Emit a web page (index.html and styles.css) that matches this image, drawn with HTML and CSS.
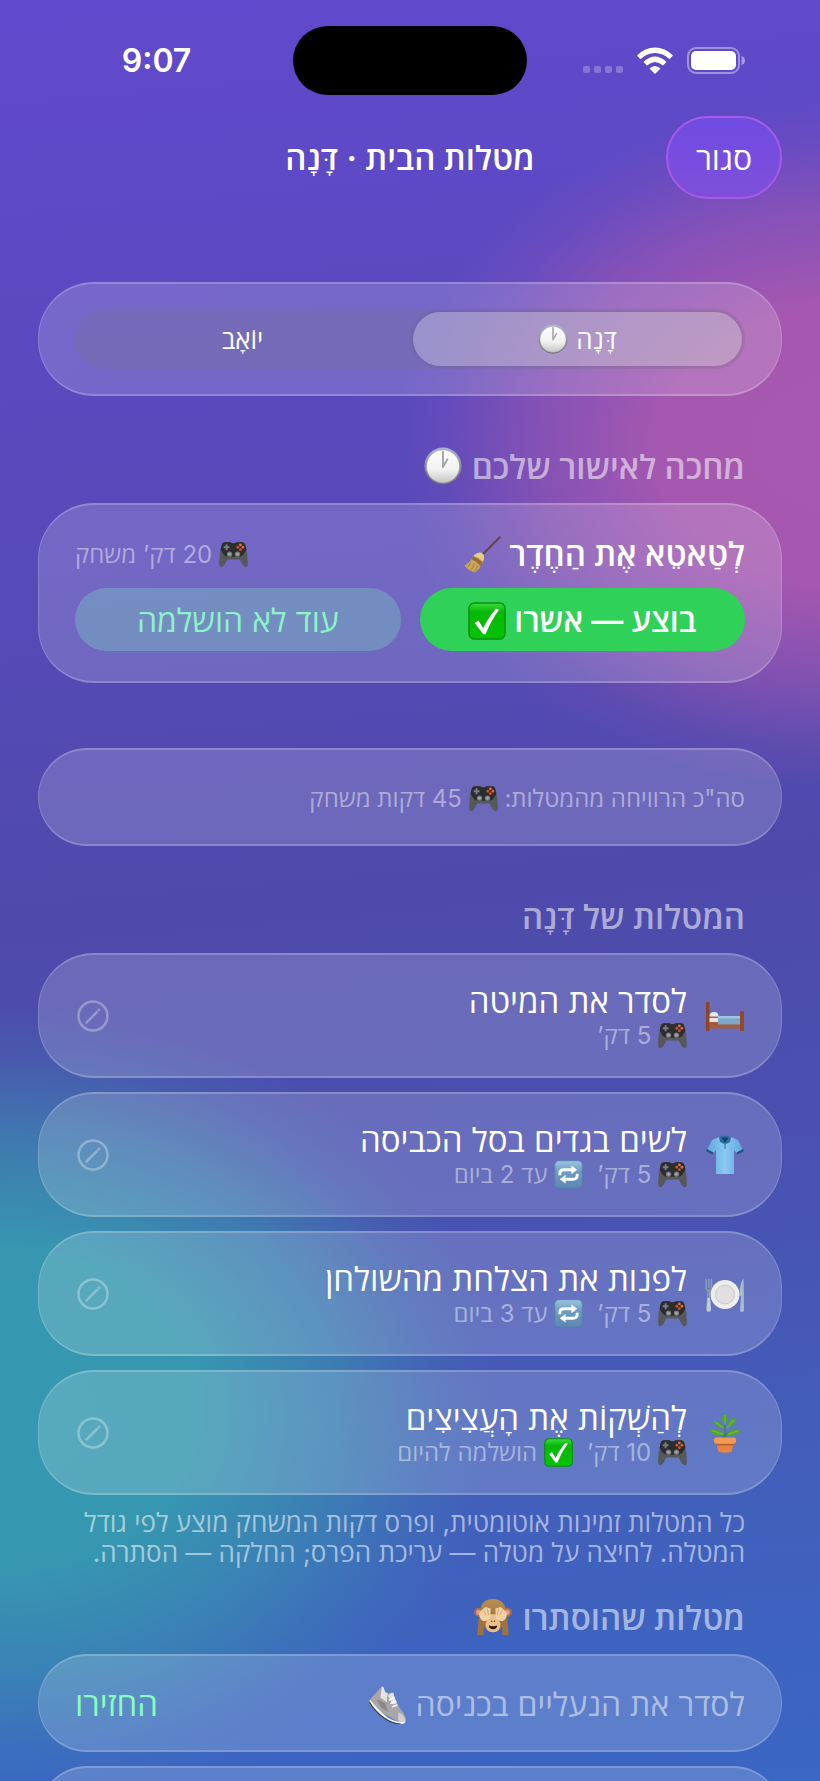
FILE: index.html
```
<!DOCTYPE html>
<html lang="he" dir="rtl">
<head>
    <meta charset="UTF-8">
    <meta name="viewport" content="width=device-width, initial-scale=1.0">
    <title>מטלות הבית</title>
    <link rel="stylesheet" href="styles.css">
</head>
<body>
    <svg class="defs" aria-hidden="true">
        <defs>
            <linearGradient id="rim" x1="0" y1="0" x2="0" y2="1">
                <stop offset="0" stop-color="#a9b6dc"/>
                <stop offset="1" stop-color="#6f7075"/>
            </linearGradient>
            <linearGradient id="face" x1="0" y1="0" x2="0" y2="1">
                <stop offset="0" stop-color="#ffffff"/>
                <stop offset=".6" stop-color="#f1f1f1"/>
                <stop offset="1" stop-color="#c4c4c4"/>
            </linearGradient>
            <linearGradient id="greenBox" x1="0" y1="0" x2="0" y2="1">
                <stop offset="0" stop-color="#3ddc3d"/>
                <stop offset=".25" stop-color="#06b806"/>
                <stop offset="1" stop-color="#04c404"/>
            </linearGradient>
            <linearGradient id="blueBox" x1="0" y1="0" x2="0" y2="1">
                <stop offset="0" stop-color="#9dc4dd"/>
                <stop offset=".4" stop-color="#6c9cc4"/>
                <stop offset="1" stop-color="#5c86b4"/>
            </linearGradient>
            <linearGradient id="shirtBlue" x1="0" y1="0" x2="1" y2="0">
                <stop offset="0" stop-color="#5fa8e0"/>
                <stop offset=".5" stop-color="#8cc8f2"/>
                <stop offset="1" stop-color="#5fa8e0"/>
            </linearGradient>
            <linearGradient id="fur" x1="0" y1="0" x2="0" y2="1">
                <stop offset="0" stop-color="#b98f52"/>
                <stop offset="1" stop-color="#8e6433"/>
            </linearGradient>
        </defs>

        <symbol id="clock" viewBox="0 0 40 40">
            <circle cx="20" cy="20" r="19.5" fill="url(#rim)"/>
            <circle cx="20" cy="20.5" r="17.5" fill="url(#face)" stroke="#8b8c90" stroke-width=".6"/>
            <path d="M20 21V5M20 21l4.6-8" stroke="#a3a3a6" stroke-width="2" stroke-linecap="round" fill="none"/>
        </symbol>

        <symbol id="broom" viewBox="0 0 40 40">
            <path d="M38.5 1.5L20 20" stroke="#6b4340" stroke-width="2.2" stroke-linecap="round"/>
            <path d="M12 20q6-5 9.500-.5q2 3-1.500 10.500q-2.500 5-7.500 8.500Q5 36 1.500 31q6-3 10.500-11z" fill="#c9a65a"/>
            <path d="M11 21.500q6 1.500 9.500 7l-1.500 3.500q-4-5-10-7.500z" fill="#9a6b3a"/>
            <path d="M12 20q6-5 9.500-.5q1.500 3-.5 7q-4-4-9.800-5.500z" fill="#e6cd86"/>
            <path d="M8 27q-1 4-3 6M12 29q-1 4-4 7M16 31q-2 4-4 6.500" stroke="#9a7838" stroke-width=".8" fill="none"/>
        </symbol>

        <symbol id="pad" viewBox="0 0 40 36">
            <path d="M8 1h8l2 1.500h4L24 1h8q3 0 4.500 4.500Q40 17 39.800 30q0 5.500-3.300 5.500q-2.500 0-4.500-4l-3.500-6.500h-17L8 31.500q-2 4-4.500 4Q.2 35.500.2 30Q0 17 3.500 5.500Q5 1 8 1z" fill="#57585a"/>
            <path d="M8 1h8l2 1.500h4L24 1h8q3 0 4.500 4.500l1.300 5.500q-4 9-9 10h-17.600q-5-1-9-10l1.300-5.500Q5 1 8 1z" fill="#2c2d2f"/>
            <path d="M10.500 4v8M6.500 8h8" stroke="#7b7e80" stroke-width="2.600"/>
            <circle cx="29.500" cy="4.800" r="1.900" fill="#e8743a"/><circle cx="33" cy="8" r="1.900" fill="#e8643a"/>
            <circle cx="29.500" cy="11.300" r="1.900" fill="#d8502a"/><circle cx="26" cy="8" r="1.900" fill="#d8502a"/>
            <circle cx="14.500" cy="17.500" r="3.700" fill="#75797b"/><circle cx="14.500" cy="17.500" r="1.800" fill="#a6aaac"/>
            <circle cx="25.500" cy="17.500" r="3.700" fill="#75797b"/><circle cx="25.500" cy="17.500" r="1.800" fill="#a6aaac"/>
        </symbol>

        <symbol id="check" viewBox="0 0 40 40">
            <rect x="1" y="1" width="38" height="38" rx="6" fill="url(#greenBox)" stroke="#0a8f0f" stroke-width="1.500"/>
            <path d="M7 22l4-2.500l5 8Q22 15 29.500 7l3.500 1Q24.500 19 18.500 34h-2.500z" fill="#fff"/>
        </symbol>

        <symbol id="repeat" viewBox="0 0 40 40">
            <rect x="1" y="1" width="38" height="38" rx="6" fill="url(#blueBox)" stroke="#557fa8" stroke-width="1"/>
            <path d="M8 21v-2q0-5.500 6-5.500h11M32 19v2q0 5.500-6 5.500H15" fill="none" stroke="#fff" stroke-width="4"/>
            <path d="M24 7.500l8 6l-8 6zM16 32.500l-8-6l8-6z" fill="#fff"/>
        </symbol>

        <symbol id="bed" viewBox="0 0 40 40">
            <path d="M2 19h8v13h-8z" fill="#a9603d"/>
            <rect x="1" y="6" width="3.500" height="29" rx="1" fill="#8b4526"/>
            <path d="M4.500 24H36v8.500H4.500z" fill="#a65c3b"/>
            <path d="M4.500 22h10v4h-10z" fill="#e9e3df"/>
            <path d="M13 20h22v8.500H13z" fill="#7ba5c9"/>
            <path d="M13 20h22v2.500H13z" fill="#9cc3df"/>
            <path d="M4.500 20q0-4 5-4q4 0 4 4.500H4.500z" fill="#dfeaf4"/>
            <rect x="35" y="15" width="4" height="20" rx="1" fill="#94482a"/>
        </symbol>

        <symbol id="shirt" viewBox="0 0 40 40">
            <path d="M14 2L7 5L2 15l6 3.500l3-3.500V39h18V15l3 3.500l6-3.500L33 5l-7-3z" fill="url(#shirtBlue)"/>
            <path d="M2 14l6.500 3.500L7.500 19.500L1 16zM38 14l-6.500 3.500l1 2L39 16z" fill="#24527f"/>
            <path d="M14 2q6-2.500 12 0l-1 5l-5 2.500L15 7z" fill="#2f6ba3"/>
            <path d="M16.500 2.500h7L20 8z" fill="#174067"/>
            <path d="M20 8v6" stroke="#4688bd" stroke-width="1.500"/>
        </symbol>

        <symbol id="plate" viewBox="0 0 40 40">
            <circle cx="20" cy="20.500" r="14.500" fill="#eeeeef"/>
            <circle cx="20" cy="20.500" r="9.500" fill="#e0e0e1" stroke="#c9c9cc" stroke-width="1"/>
            <path d="M1 5v8q0 3 2 3.500L2 36q0 1.500 1.500 1.500T5 36L4.500 16.500Q6.500 16 6.500 13V5M3.800 5v9" fill="none" stroke="#8c9fb5" stroke-width="1.400"/>
            <path d="M2.500 24h2.500l1 12q-2.200 3-4.400 0z" fill="#c4ccd6"/>
            <path d="M38.500 4q-4 6-4 18h1.500l-1 15q2 2 4 0z" fill="#a9bbd0"/>
        </symbol>

        <symbol id="plant" viewBox="0 0 40 40">
            <path d="M20 26V12M20 24Q15 21 12 19M20 22q5-3 9-4" stroke="#3f8a2c" stroke-width="1.500" fill="none"/>
            <path d="M20 11q-6-5 0-11q5 6 0 11zM18.500 15q-9 0-10.500-7q8 0 10.500 7zM22 15q0-8 8-10.500q2 8-8 10.500zM19 22Q9 25 4 16.500Q14 14 19 22zM21.500 22q5-8 15-5.500q-5 8-15 5.500z" fill="#4fa52f"/>
            <path d="M20 11V2M18.500 15L10 9M22 15l7-8.500M18 21.500L7 17.500M22.500 21.500L34 17.500" stroke="#7cc653" stroke-width=".8"/>
            <path d="M11 29h18l-2.500 10q-6.500 1.500-13 0z" fill="#e58540"/>
            <rect x="9" y="24.500" width="22" height="6" rx="2" fill="#f29a55"/>
            <path d="M11.500 31h17l-.4 1.500H11.900z" fill="#b95f26"/>
        </symbol>

        <symbol id="monkey" viewBox="0 0 40 40">
            <circle cx="5" cy="15" r="4.800" fill="#a0743f"/><circle cx="35" cy="15" r="4.800" fill="#a0743f"/>
            <circle cx="5" cy="15" r="2.800" fill="#f08f8f"/><circle cx="35" cy="15" r="2.800" fill="#f08f8f"/>
            <path d="M6 16Q7 1 20 1t14 15q0 12-6 16q-4 4-8 4t-8-4Q6 28 6 16z" fill="url(#fur)"/>
            <path d="M17 17h6l5 10q0 9-8 9t-8-9z" fill="#e8c08b"/>
            <path d="M15.500 29q4.500 1.500 9 0q-.5 4-4.500 4t-4.500-4z" fill="#3a1710"/>
            <path d="M18 24l1 1M22 24l-1 1" stroke="#6b4525" stroke-width="1.300"/>
            <path d="M5 21q4-4 9 0l-3.500 6l-.5 12H3.500zM35 21q-4-4-9 0l3.500 6l.5 12h6.500z" fill="#a0733e"/>
            <path d="M7 22Q4 17 6.500 14L12 9.500l5.500 1.500l-.5 10q-3 4.500-8 3zM33 22Q36 17 33.500 14L28 9.500l-5.500 1.500l.5 10q3 4.500 8 3z" fill="#f2d1a3"/>
            <path d="M10 13l3 5M14 11l1.500 7M30 13l-3 5M26 11l-1.500 7" stroke="#cfa06a" stroke-width=".9"/>
        </symbol>

        <symbol id="shoe" viewBox="0 0 40 40">
            <path d="M1 15Q2 12 6 9L13.500.5q2 0 2.500 3q1 4 4 4.500q3-1.500 5.500-1q1 6 4 11q2 5 6.500 10q3 5 2.500 9q-8 2-16-4Q8 26 1 15z" fill="#a9a7a5"/>
            <path d="M13.500.5q2 0 2.500 3q1 4 4 4.500q-2 5-1 9l-7-5q1-6 1.500-11.500zM20 10q3-3 5.500-3q1 6 4 11q-3 2-5 1z" fill="#e4e4e4"/>
            <path d="M8 14l9 4l3 9l-7-4z" fill="#8b8987"/>
            <path d="M31 28q4 1 6 4q2 3 1.500 5q-4 1-8-1z" fill="#cfcecd"/>
            <path d="M1 14q8 11 18 18.500q9 6.500 19.500 4.500q-1 3-5 3q-9 0-18-7Q4 25 .5 17z" fill="#f3f3f3"/>
            <path d="M.5 17q5 9 15 16.500q9 6.500 18 6.500" stroke="#3f4143" stroke-width="1.200" fill="none"/>
            <path d="M21 15l6-3M22.500 18.500l6-3M24 22l6-2" stroke="#fff" stroke-width="1.400"/>
        </symbol>

        <symbol id="hide" viewBox="0 0 32 32">
            <circle cx="16" cy="16" r="14.500" fill="none" stroke="currentColor" stroke-width="2.500"/>
            <path d="M9.500 22.500l10.500-10.500" stroke="currentColor" stroke-width="2.500" stroke-linecap="round"/>
            <circle cx="22" cy="10" r="1.400" fill="currentColor"/>
        </symbol>
    </svg>

    <div class="screen">
        <div class="status" dir="ltr">
            <div class="time">9:07</div>
            <div class="island"></div>
            <div class="signals">
                <svg width="40" height="8" viewBox="0 0 40 8" fill="#fff" fill-opacity=".25">
                    <rect x="0" y="0" width="7" height="7" rx="2"/><rect x="11" y="0" width="7" height="7" rx="2"/>
                    <rect x="22" y="0" width="7" height="7" rx="2"/><rect x="33" y="0" width="7" height="7" rx="2"/>
                </svg>
                <svg width="36" height="27" viewBox="0 0 36 27" fill="#fff">
                    <path d="M0 8.500Q8 .5 18 .5t18 8l-3.500 3.800Q26 6 18 6T3.500 12.300z"/>
                    <path d="M6.500 15Q12 9.500 18 9.500T29.500 15L26 18.500Q22 15 18 15t-8 3.500z"/>
                    <path d="M12.500 21.500q5.500-5 11 0L18 27z"/>
                </svg>
                <svg width="58" height="27" viewBox="0 0 58 27">
                    <rect x="1" y="1" width="51" height="25" rx="8" fill="none" stroke="#fff" stroke-opacity=".4" stroke-width="2"/>
                    <rect x="4" y="4" width="45" height="19" rx="5" fill="#fff"/>
                    <path d="M54.500 9q3.500 1 3.500 4.500t-3.500 4.500z" fill="#fff" fill-opacity=".45"/>
                </svg>
            </div>
        </div>

        <header class="nav">
            <button class="close" type="button">סגור</button>
            <h1>מטלות הבית · דָּנָה</h1>
        </header>

        <main>
            <div class="card switcher">
                <div class="segments">
                    <input type="radio" name="kid" id="dana" checked>
                    <label for="dana">דָּנָה <svg class="em"><use href="#clock"/></svg></label>
                    <input type="radio" name="kid" id="yoav">
                    <label for="yoav">יוֹאָב</label>
                </div>
            </div>

            <h2>מחכה לאישור שלכם <svg class="em"><use href="#clock"/></svg></h2>
            <div class="card pending">
                <div class="pending-top">
                    <h3>לְטַאטֵא אֶת הַחֶדֶר <svg class="em"><use href="#broom"/></svg></h3>
                    <span class="small"><svg class="em"><use href="#pad"/></svg> 20 דק’ משחק</span>
                </div>
                <div class="actions">
                    <button class="approve" type="button">בוצע — אשרו <svg class="em"><use href="#check"/></svg></button>
                    <button class="reject" type="button">עוד לא הושלמה</button>
                </div>
            </div>

            <div class="card total small">
                <span>סה"כ הרוויחה מהמטלות: <svg class="em"><use href="#pad"/></svg> 45 דקות משחק</span>
            </div>

            <h2>המטלות של דָּנָה</h2>
            <ul class="tasks">
                <li class="card task">
                    <svg class="icon"><use href="#bed"/></svg>
                    <div class="info">
                        <div class="name">לסדר את המיטה</div>
                        <div class="small"><span><svg class="em"><use href="#pad"/></svg> 5 דק’</span></div>
                    </div>
                    <button class="hide" type="button" aria-label="הסתרה"><svg><use href="#hide"/></svg></button>
                </li>
                <li class="card task">
                    <svg class="icon"><use href="#shirt"/></svg>
                    <div class="info">
                        <div class="name">לשים בגדים בסל הכביסה</div>
                        <div class="small"><span><svg class="em"><use href="#pad"/></svg> 5 דק’</span><span><svg class="em"><use href="#repeat"/></svg> עד 2 ביום</span></div>
                    </div>
                    <button class="hide" type="button" aria-label="הסתרה"><svg><use href="#hide"/></svg></button>
                </li>
                <li class="card task">
                    <svg class="icon"><use href="#plate"/></svg>
                    <div class="info">
                        <div class="name">לפנות את הצלחת מהשולחן</div>
                        <div class="small"><span><svg class="em"><use href="#pad"/></svg> 5 דק’</span><span><svg class="em"><use href="#repeat"/></svg> עד 3 ביום</span></div>
                    </div>
                    <button class="hide" type="button" aria-label="הסתרה"><svg><use href="#hide"/></svg></button>
                </li>
                <li class="card task">
                    <svg class="icon"><use href="#plant"/></svg>
                    <div class="info">
                        <div class="name">לְהַשְׁקוֹת אֶת הָעֲצִיצִים</div>
                        <div class="small"><span><svg class="em"><use href="#pad"/></svg> 10 דק’</span><span><svg class="em"><use href="#check"/></svg> הושלמה להיום</span></div>
                    </div>
                    <button class="hide" type="button" aria-label="הסתרה"><svg><use href="#hide"/></svg></button>
                </li>
            </ul>
            <p class="note">כל המטלות זמינות אוטומטית, ופרס דקות המשחק מוצע לפי גודל המטלה. לחיצה על מטלה — עריכת הפרס; החלקה — הסתרה.</p>

            <h2 class="after-note">מטלות שהוסתרו <svg class="em"><use href="#monkey"/></svg></h2>
            <ul class="tasks">
                <li class="card hidden-task">
                    <span>לסדר את הנעליים בכניסה <svg class="em"><use href="#shoe"/></svg></span>
                    <button class="restore" type="button">החזירו</button>
                </li>
                <li class="card hidden-task"></li>
            </ul>
        </main>
    </div>
</body>
</html>
```
FILE: styles.css
```
* { box-sizing: border-box; }

body {
    margin: 0;
    background-color: #4f49a9;
    color: white;
    font-family: Inter, "Open Sans", "Liberation Sans", sans-serif;
    font-size: 32px;
}

h1, h2, h3, p, ul { margin: 0; padding: 0; }

ul { list-style: none; }

button {
    border: none;
    background: none;
    padding: 0;
    color: inherit;
    font: inherit;
    cursor: pointer;
}

.defs {
    position: absolute;
    width: 0;
    height: 0;
}

.screen {
    height: 100vh;
    overflow: hidden;
    background:
        radial-gradient(440px 345px at 102% 25%, rgba(168, 88, 176, 1) 0%, rgba(168, 88, 176, .96) 40%, rgba(168, 88, 176, .55) 68%, rgba(168, 88, 176, .15) 88%, rgba(168, 88, 176, 0) 100%),
        radial-gradient(500px 400px at 0% 79%, rgba(54, 153, 176, 1) 0%, rgba(54, 153, 176, .96) 40%, rgba(54, 153, 176, .55) 68%, rgba(54, 153, 176, .15) 88%, rgba(54, 153, 176, 0) 100%),
        linear-gradient(175deg, #6149cd 0%, #5b49c0 20%, #4e4aab 50%, #4a50b0 65%, #4160bc 85%, #3a66c4 100%);
}

.em {
    width: 38px;
    height: 38px;
    vertical-align: -8px;
    flex: none;
}

/* status bar */
.status {
    display: grid;
    grid-template-columns: 1fr 234px 1fr;
    align-items: center;
    padding-top: 26px;
}

.time {
    padding-left: 20px;
    text-align: center;
    font-weight: 600;
}

.island {
    height: 69px;
    border-radius: 35px;
    background-color: black;
}

.signals {
    display: flex;
    justify-content: center;
    align-items: flex-end;
    gap: 14px;
    padding-right: 20px;
}

/* title row */
.nav {
    display: grid;
    grid-template-columns: 116px 1fr 116px;
    align-items: center;
    margin: 21px 38px 0;
}

.close {
    height: 83px;
    border: 2px solid #a65be6;
    border-radius: 42px;
    background: linear-gradient(#704be3, #7f4fd9);
}

h1 {
    font-size: 33px;
    font-weight: 600;
    text-align: center;
}

main { padding: 83px 38px 0; }

.card {
    border: 1px solid rgba(255, 255, 255, .16);
    border-width: 2px 1px;
    border-top-color: rgba(255, 255, 255, .21);
    border-bottom-color: rgba(255, 255, 255, .21);
    border-radius: 56px;
    background-color: rgba(255, 255, 255, .17);
    padding: 0 36px;
}

h2 {
    display: flex;
    align-items: center;
    gap: 10px;
    height: 40px;
    margin: 50px 37px 17px;
    color: rgba(255, 255, 255, .55);
    font-size: 33px;
    font-weight: 600;
}

.small {
    color: rgba(255, 255, 255, .45);
    font-size: 24px;
}

.small .em {
    width: 29px;
    height: 29px;
    vertical-align: -6px;
}

/* kid switcher */
.switcher {
    padding-top: 25px;
    padding-bottom: 25px;
}

.segments {
    display: flex;
    gap: 6px;
    padding: 3px;
    border-radius: 30px;
    background-color: rgba(118, 118, 128, .24);
    font-size: 26px;
}

.segments input {
    position: absolute;
    opacity: 0;
}

.segments label {
    display: flex;
    flex: 1;
    justify-content: center;
    align-items: center;
    gap: 8px;
    height: 54px;
    border-radius: 27px;
}

.segments .em {
    width: 30px;
    height: 30px;
}

.segments input:checked + label {
    background-color: rgba(255, 255, 255, .27);
    box-shadow: 0 0 5px rgba(0, 0, 0, .12);
}

/* waiting for approval */
.pending {
    padding-top: 30px;
    padding-bottom: 30px;
}

.pending-top {
    display: flex;
    justify-content: space-between;
    align-items: center;
    height: 36px;
    margin-bottom: 17px;
}

h3 {
    font-size: 33px;
    font-weight: 600;
}

.actions {
    display: flex;
    gap: 19px;
}

.actions button {
    flex: 1;
    height: 63px;
    border-radius: 32px;
}

.approve {
    background-color: #30d158;
    font-weight: 600;
}

.reject {
    background-color: rgba(128, 255, 192, .25);
    color: #8cf2c8;
}

.total {
    display: flex;
    align-items: center;
    height: 98px;
    margin-top: 65px;
}

/* task list */
.tasks {
    display: flex;
    flex-direction: column;
    gap: 14px;
}

.task {
    display: flex;
    align-items: center;
    gap: 18px;
    height: 125px;
}

.icon {
    width: 40px;
    height: 40px;
}

.info { flex: 1; }

.name {
    font-size: 33px;
    line-height: 40px;
}

.task .small {
    display: flex;
    gap: 14px;
    line-height: 30px;
}

.hide {
    margin-left: 2px;
    color: rgba(255, 255, 255, .3);
}

.hide svg {
    display: block;
    width: 32px;
    height: 32px;
}

.note {
    margin: 13px 37px 0;
    color: rgba(255, 255, 255, .55);
    font-size: 26px;
    line-height: 30px;
}

h2.after-note { margin-top: 29px; }

.hidden-task {
    display: flex;
    justify-content: space-between;
    align-items: center;
    height: 98px;
    color: rgba(255, 255, 255, .5);
}

.restore {
    color: #88fbc0;
    font-size: 33px;
}
```
